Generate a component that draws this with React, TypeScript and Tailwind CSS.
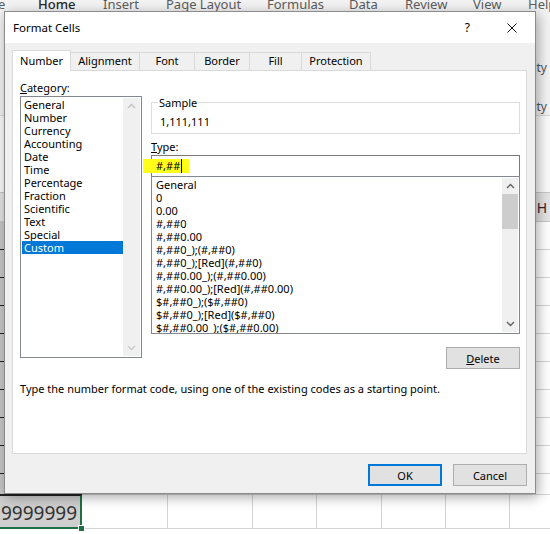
import React from "react";

const ui = "font-['Segoe_UI','Noto_Sans',sans-serif]";

const ribbonTabs = [
    { label: "e", w: "w-[40px] ml-[-2px]" },
    { label: "Home", w: "w-[65px]", active: true },
    { label: "Insert", w: "w-[63px]" },
    { label: "Page Layout", w: "w-[101px]" },
    { label: "Formulas", w: "w-[82px]" },
    { label: "Data", w: "w-[56px]" },
    { label: "Review", w: "w-[68px]" },
    { label: "View", w: "w-[55px]" },
    { label: "Help", w: "w-[40px]" },
];

const colWidths = ["w-[82px]", "w-[86px]", "w-[85px]", "w-[64px]", "w-[65px]", "w-[64px]", "w-[64px]", "w-[65px]"];
const colNames = ["A", "B", "C", "D", "E", "F", "G", "H"];
const rowHeights = ["h-[28px]", "h-[28px]", "h-[28px]", "h-[28px]", "h-[28px]", "h-[28px]", "h-[28px]", "h-[28px]", "h-[28px]", "h-[21px]"];

const tabs = [
    { label: "Number", w: "w-[59px]" },
    { label: "Alignment", w: "w-[69px]" },
    { label: "Font", w: "w-[55px]" },
    { label: "Border", w: "w-[55px]" },
    { label: "Fill", w: "w-[52px]" },
    { label: "Protection", w: "w-[69px]" },
];

const categories = [
    "General", "Number", "Currency", "Accounting", "Date", "Time",
    "Percentage", "Fraction", "Scientific", "Text", "Special", "Custom",
];

const formats = [
    "General",
    "0",
    "0.00",
    "#,##0",
    "#,##0.00",
    "#,##0_);(#,##0)",
    "#,##0_);[Red](#,##0)",
    "#,##0.00_);(#,##0.00)",
    "#,##0.00_);[Red](#,##0.00)",
    "$#,##0_);($#,##0)",
    "$#,##0_);[Red]($#,##0)",
    "$#,##0.00_);($#,##0.00)",
    "$#,##0.00_);[Red]($#,##0.00)",
];

function Chevron({ up, color }: { up?: boolean; color: string }) {
    return (
        <svg width="9" height="6" viewBox="0 0 9 6">
            <polyline
                points={up ? "1,5 4.5,1.5 8,5" : "1,1 4.5,4.5 8,1"}
                fill="none"
                stroke={color}
                strokeWidth="1.4"
            />
        </svg>
    );
}

function ExcelBackdrop() {
    return (
        <div className="flex flex-col">
            {/* Ribbon */}
            <div className="h-[115px] bg-[#f3f3f3] flex flex-col">
                <div className="h-[12px] overflow-hidden flex">
                    {ribbonTabs.map((t) => (
                        <span
                            key={t.label}
                            className={`${t.w} shrink-0 text-[13px] leading-[14px] mt-[-3px] whitespace-nowrap ${t.active ? "text-[#262626] font-medium" : "text-[#5c5c5c]"}`}
                        >
                            {t.label}
                        </span>
                    ))}
                </div>
                <div className="flex flex-col items-end pr-[3px] text-[12px] text-[#555] leading-[16px]">
                    <span className="mt-[48px]">Sensitivity</span>
                    <span className="mt-[23px]">Sensitivity</span>
                </div>
            </div>

            {/* Formula bar area */}
            <div className="h-[77px] bg-[#fafafa] border-t border-[#dadada]" />

            {/* Column headers */}
            <div className="h-[30px] flex bg-[#e4e4e4] border-y border-[#c8c8c8]">
                {colNames.map((c, i) => (
                    <div key={c} className={`${colWidths[i]} shrink-0 border-r border-[#c8c8c8] flex items-center justify-center text-[14px] text-[#3b2030]`}>
                        {c}
                    </div>
                ))}
            </div>

            {/* Grid */}
            {rowHeights.map((h, r) => (
                <div key={r} className={`${h} flex`}>
                    {colWidths.map((w, c) => (
                        <div
                            key={c}
                            className={`${w} shrink-0 border-r border-b ${c === 0 ? "bg-[#c8c8c8] border-[#222]" : "border-[#d4d4d4]"}`}
                        />
                    ))}
                </div>
            ))}
            <div className="h-[34px] flex">
                <div className="w-[82px] shrink-0 relative bg-[#cfcfcf] border-t border-[#222] border-r-2 border-b-2 border-r-[#1e7145] border-b-[#1e7145] flex items-end pl-[1px] pb-[2px]">
                    <span className="text-[19px] leading-[24px] text-[#333] font-['Noto_Sans',sans-serif]">9999999</span>
                    <div className="absolute right-[-5px] bottom-[-5px] w-[7px] h-[7px] bg-[#1e7145] border border-white" />
                </div>
                {colWidths.slice(1).map((w, c) => (
                    <div key={c} className={`${w} shrink-0 border-r border-b border-[#d4d4d4]`} />
                ))}
            </div>
        </div>
    );
}

export default function App() {
    return (
        <div className={`relative w-[550px] h-[534px] overflow-hidden bg-white ${ui} text-[11px] text-black`}>
            <ExcelBackdrop />

            {/* Dialog window */}
            <div className="absolute left-[4px] top-[11px] w-[532px] h-[483px] border border-[#8c8c8c] bg-[#f0f0f0] shadow-[2px_3px_12px_rgba(0,0,0,0.35)] flex flex-col">

                {/* Title bar */}
                <div className="h-[31px] bg-white flex items-center pl-[8px] pr-[18px]">
                    <span className="text-[11.5px]">Format Cells</span>
                    <span className="ml-auto text-[12px] leading-none">?</span>
                    <svg className="ml-[37px]" width="10" height="10" viewBox="0 0 10 10">
                        <path d="M0.5 0.5 L9.5 9.5 M9.5 0.5 L0.5 9.5" stroke="#111" strokeWidth="1" fill="none" />
                    </svg>
                </div>

                {/* Body */}
                <div className="flex flex-col pl-[7px] pr-[8px] pt-[8px]">

                    {/* Tabs */}
                    <div className="h-[20px] flex items-end relative z-10 mb-[-1px]">
                        {tabs.map((t, i) => (
                            <div
                                key={t.label}
                                className={`${t.w} shrink-0 flex items-center justify-center ${i === 0
                                    ? "h-[21px] bg-white border-l border-t border-r border-[#d9d9d9]"
                                    : "h-[19px] bg-[#f0f0f0] border-t border-r border-b border-[#d9d9d9]"}`}
                            >
                                {t.label}
                            </div>
                        ))}
                    </div>

                    {/* Panel */}
                    <div className="w-[515px] h-[384px] bg-white border border-[#d9d9d9] flex flex-col">
                        <div className="flex pl-[7px]">

                            {/* Category */}
                            <div className="w-[122px] shrink-0 flex flex-col">
                                <div className="mt-[9px] leading-[15px]"><u>C</u>ategory:</div>
                                <div className="mt-[1px] h-[262px] border border-[#828790] flex">
                                    <div className="flex-1 pt-[1px] pl-[1px] flex flex-col">
                                        {categories.map((c) => (
                                            <div
                                                key={c}
                                                className={`leading-[13px] pl-[2px] ${c === "Custom" ? "bg-[#0078d7] text-white" : ""}`}
                                            >
                                                {c}
                                            </div>
                                        ))}
                                    </div>
                                    <div className="w-[17px] mr-[1px] my-[1px] bg-[#f0f0f0] flex flex-col items-center justify-between py-[5px]">
                                        <Chevron up color="#c2c2c2" />
                                        <Chevron color="#c8c8c8" />
                                    </div>
                                </div>
                            </div>

                            {/* Right side */}
                            <div className="ml-[9px] w-[369px] flex flex-col">
                                <fieldset className="mt-[24px] border border-[#dcdcdc]">
                                    <legend className="ml-[6px] px-[1px] leading-[15px]">Sample</legend>
                                    <div className="pl-[8px] pt-[4px] pb-[4px] leading-[15px]">1,111,111</div>
                                </fieldset>

                                <div className="mt-[5px] leading-[15px]"><u>T</u>ype:</div>
                                <div className="mt-[1px] h-[21px] border border-b-0 border-[#7a7a7a] relative flex items-center pl-[4px]">
                                    <div className="absolute left-[-9px] top-[3px] w-[46px] h-[14px] bg-[#ffff1a]" />
                                    <span className="relative leading-[14px]">#,##</span>
                                    <span className="relative w-[1px] h-[14px] bg-black ml-[1px]" />
                                </div>

                                <div className="h-[158px] border border-[#828790] flex overflow-hidden">
                                    <div className="flex-1 pt-[1px] pl-[4px] flex flex-col overflow-hidden">
                                        {formats.map((f) => (
                                            <div key={f} className="leading-[13px] whitespace-nowrap">{f}</div>
                                        ))}
                                    </div>
                                    <div className="w-[16px] mr-[1px] my-[1px] bg-[#f0f0f0] flex flex-col">
                                        <div className="h-[16px] flex items-center justify-center">
                                            <Chevron up color="#606060" />
                                        </div>
                                        <div className="h-[35px] bg-[#cdcdcd]" />
                                        <div className="flex-1" />
                                        <div className="h-[16px] flex items-center justify-center">
                                            <Chevron color="#606060" />
                                        </div>
                                    </div>
                                </div>

                                <button className="mt-[13px] self-end w-[74px] h-[22px] bg-[#e1e1e1] border border-[#adadad] leading-none">
                                    <u>D</u>elete
                                </button>
                            </div>
                        </div>

                        <div className="mt-[12px] pl-[7px] leading-[15px]">
                            Type the number format code, using one of the existing codes as a starting point.
                        </div>
                    </div>

                    {/* Buttons */}
                    <div className="mt-[10px] flex justify-end gap-[11px]">
                        <button className="w-[74px] h-[22px] bg-[#e1e1e1] border-2 border-[#0078d7] leading-none">OK</button>
                        <button className="w-[74px] h-[22px] bg-[#e1e1e1] border border-[#adadad] leading-none">Cancel</button>
                    </div>
                </div>
            </div>
        </div>
    );
}
